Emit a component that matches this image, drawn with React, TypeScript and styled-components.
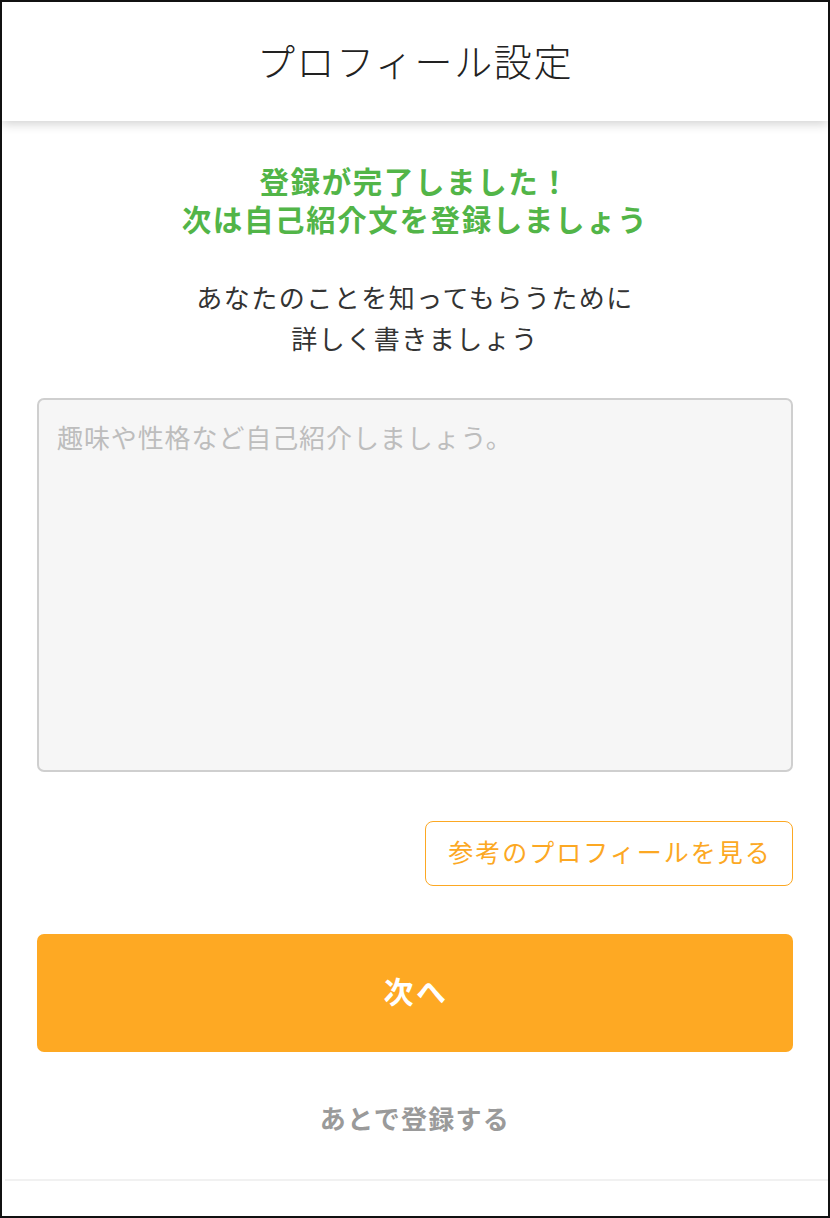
import React from "react";
import styled, { createGlobalStyle } from "styled-components";

const Global = createGlobalStyle`
  html, body {
    margin: 0;
    padding: 0;
    background: #ffffff;
  }
  * {
    box-sizing: border-box;
  }
`;

const Frame = styled.div`
  width: 830px;
  height: 1218px;
  border: 2px solid #111;
  background: #fff;
  display: flex;
  flex-direction: column;
  font-family: "Noto Sans CJK JP", "Noto Sans", sans-serif;
  overflow: hidden;
`;

const Header = styled.header`
  height: 119px;
  flex-shrink: 0;
  display: flex;
  align-items: center;
  justify-content: center;
  background: #fff;
  box-shadow: 0 3px 10px rgba(0, 0, 0, 0.18);
  position: relative;
  z-index: 1;
`;

const HeaderTitle = styled.h1`
  margin: 0 0 4px;
  font-size: 38px;
  font-weight: 300;
  color: #222;
  letter-spacing: 1.6px;
`;

const Body = styled.main`
  flex: 1;
  display: flex;
  flex-direction: column;
  padding: 40px 35px 0;
`;

const Lead = styled.p`
  margin: 0;
  text-align: center;
  font-size: 29.5px;
  line-height: 38px;
  font-weight: 700;
  color: #52b548;
  letter-spacing: 1.6px;
`;

const Sub = styled.p`
  margin: 39px 0 0;
  text-align: center;
  font-size: 26px;
  line-height: 41px;
  font-weight: 400;
  color: #333;
  letter-spacing: 1.5px;
`;

const Intro = styled.textarea`
  margin-top: 40px;
  width: 100%;
  height: 374px;
  resize: none;
  border: 2px solid #cfcfcf;
  border-radius: 7px;
  background: #f6f6f6;
  padding: 17px 18px;
  font-family: inherit;
  font-size: 26px;
  line-height: 39px;
  letter-spacing: 0.9px;
  color: #333;
  outline: none;

  &::placeholder {
    color: #bdbdbd;
  }
`;

const RefRow = styled.div`
  margin-top: 49px;
  display: flex;
  justify-content: flex-end;
`;

const RefButton = styled.button`
  width: 368px;
  height: 65px;
  border: 1px solid #fca823;
  border-radius: 8px;
  background: #fff;
  color: #fca823;
  font-family: inherit;
  font-size: 25px;
  line-height: 1;
  font-weight: 400;
  letter-spacing: 2px;
  padding: 0 0 4px 2px;
`;

const NextButton = styled.button`
  margin-top: 48px;
  width: 100%;
  height: 118px;
  border: none;
  border-radius: 7px;
  background: #fea923;
  color: #fff;
  font-family: inherit;
  font-size: 30px;
  line-height: 1;
  font-weight: 700;
  letter-spacing: 2.5px;
  padding: 0 0 6px 2px;
`;

const Later = styled.button`
  margin-top: 46px;
  align-self: center;
  border: none;
  background: none;
  padding: 0;
  font-family: inherit;
  font-size: 26px;
  line-height: 40px;
  font-weight: 700;
  letter-spacing: 1.3px;
  color: #9a9a9a;
`;

const Footer = styled.div`
  margin: auto 0 35px 3px;
  height: 2px;
  background: #f1f1f1;
`;

const App = () => {
  return (
    <>
      <Global />
      <Frame>
        <Header>
          <HeaderTitle>プロフィール設定</HeaderTitle>
        </Header>
        <Body>
          <Lead>
            登録が完了しました！
            <br />
            次は自己紹介文を登録しましょう
          </Lead>
          <Sub>
            あなたのことを知ってもらうために
            <br />
            詳しく書きましょう
          </Sub>
          <Intro placeholder="趣味や性格など自己紹介しましょう。" />
          <RefRow>
            <RefButton>参考のプロフィールを見る</RefButton>
          </RefRow>
          <NextButton>次へ</NextButton>
          <Later>あとで登録する</Later>
        </Body>
        <Footer />
      </Frame>
    </>
  );
};

export default App;
